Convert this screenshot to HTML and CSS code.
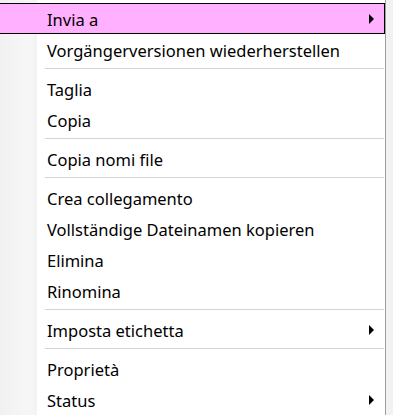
FILE: index.html
```html
<!DOCTYPE html>
<html lang="it">
<head>
    <meta charset="UTF-8">
    <meta name="viewport" content="width=device-width, initial-scale=1.0">
    <title>Menu contestuale</title>
    <link rel="stylesheet" href="styles.css">
</head>
<body>
    <div class="menu">
        <div class="item active">Invia a <span class="arrow"></span></div>
        <div class="item">Vorgängerversionen wiederherstellen</div>
        <div class="sep"></div>
        <div class="item">Taglia</div>
        <div class="item">Copia</div>
        <div class="sep"></div>
        <div class="item">Copia nomi file</div>
        <div class="sep"></div>
        <div class="item">Crea collegamento</div>
        <div class="item">Vollständige Dateinamen kopieren</div>
        <div class="item">Elimina</div>
        <div class="item">Rinomina</div>
        <div class="sep"></div>
        <div class="item">Imposta etichetta <span class="arrow"></span></div>
        <div class="sep"></div>
        <div class="item">Proprietà</div>
        <div class="item">Status <span class="arrow"></span></div>
    </div>
</body>
</html>
```

FILE: styles.css
```css
* {
    margin: 0;
    padding: 0;
    box-sizing: border-box;
}

body {
    background-color: #f2f2f2;
    font-family: "Noto Sans", "Open Sans", sans-serif;
    font-size: 16.5px;
    color: #000;
    overflow: hidden;
}

.menu {
    width: 386px;
    height: 415px;
    padding-top: 3px;
    border-right: 1px solid #a0a0a0;
    background: linear-gradient(to right, #f1f1f1 0, #f7f7f7 30px, #f3f3f3 37px, #fff 37px);
    display: flex;
    flex-direction: column;
}

.item {
    height: 31px;
    line-height: 29px;
    padding-left: 47px;
    padding-top: 1px;
    border: 1px solid transparent;
    border-left: none;
    display: flex;
    align-items: center;
    justify-content: space-between;
    padding-right: 10px;
}

.item.active {
    background-color: #ffb0ff;
    border-color: #000;
}

.arrow {
    width: 0;
    height: 0;
    border-top: 5px solid transparent;
    border-bottom: 5px solid transparent;
    border-left: 5px solid #000;
}

.sep {
    height: 8px;
    padding-top: 3px;
    margin-left: 45px;
    margin-right: 1px;
}

.sep::before {
    content: "";
    display: block;
    height: 1px;
    background-color: #d4d4d4;
}
```
